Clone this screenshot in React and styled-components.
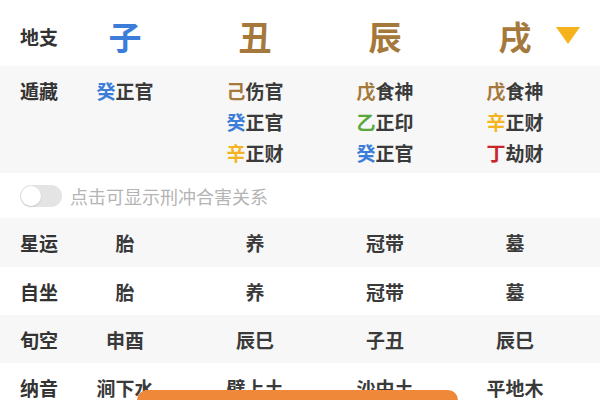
import styled, { createGlobalStyle } from "styled-components";

const GlobalStyle = createGlobalStyle`
  body {
    margin: 0;
    background: #fff;
    font-family: "Noto Sans CJK SC", "Noto Sans", sans-serif;
    color: #333;
    overflow: hidden;
  }
`;

const Page = styled.div`
  position: relative;
  width: 600px;
  height: 400px;
  overflow: hidden;
`;

const Row = styled.div`
  display: grid;
  grid-template-columns: 40px repeat(4, 130px);
  padding: ${(p) => p.top || 0}px 20px 0;
  height: ${(p) => p.h}px;
  box-sizing: border-box;
  align-items: ${(p) => p.align || "center"};
  background: ${(p) => (p.gray ? "#f7f7f7" : "#fff")};
  position: relative;
`;

const Label = styled.div`
  font-size: 19px;
  font-weight: 700;
  color: #333;
  line-height: 31px;
  white-space: nowrap;
`;

const Cell = styled.div`
  text-align: center;
  font-size: 19px;
  font-weight: 700;
  color: #3a3a3a;
  line-height: 31px;
`;

const Branch = styled.div`
  text-align: center;
  font-size: 33px;
  font-weight: 700;
  color: ${(p) => p.color};
  line-height: 40px;
`;

const Stack = styled.div`
  display: flex;
  flex-direction: column;
  align-items: center;
`;

const Line = styled.div`
  font-size: 19px;
  font-weight: 700;
  color: #3a3a3a;
  line-height: 31px;
  white-space: nowrap;
`;

const Stem = styled.span`
  color: ${(p) => p.color};
`;

const Arrow = styled.div`
  position: absolute;
  right: 20px;
  top: 27px;
  width: 0;
  height: 0;
  border-left: 12px solid transparent;
  border-right: 12px solid transparent;
  border-top: 17px solid #f5b21b;
`;

const ToggleRow = styled.div`
  display: flex;
  align-items: center;
  gap: 8px;
  height: 45px;
  padding: 0 20px;
  background: #fff;
`;

const Track = styled.div`
  position: relative;
  width: 42px;
  height: 22px;
  border-radius: 11px;
  background: #e4e4e4;
`;

const Knob = styled.div`
  position: absolute;
  left: 1px;
  top: 1px;
  width: 20px;
  height: 20px;
  border-radius: 50%;
  background: #fff;
  box-shadow: 0 1px 2px rgba(0, 0, 0, 0.12);
`;

const Hint = styled.div`
  font-size: 18px;
  color: #b4b4b4;
`;

const ActionBar = styled.div`
  position: absolute;
  left: 137px;
  bottom: 0;
  width: 321px;
  height: 10px;
  border-radius: 10px 10px 0 0;
  background: #f0883a;
`;

const BLUE = "#3b7dd8";
const BROWN = "#a5783c";
const YELLOW = "#f2b41f";
const GREEN = "#5aa83c";
const RED = "#c9262a";

const branches = [
  { ch: "子", color: BLUE },
  { ch: "丑", color: BROWN },
  { ch: "辰", color: BROWN },
  { ch: "戌", color: BROWN },
];

const hidden = [
  [["癸", BLUE, "正官"]],
  [
    ["己", BROWN, "伤官"],
    ["癸", BLUE, "正官"],
    ["辛", YELLOW, "正财"],
  ],
  [
    ["戊", BROWN, "食神"],
    ["乙", GREEN, "正印"],
    ["癸", BLUE, "正官"],
  ],
  [
    ["戊", BROWN, "食神"],
    ["辛", YELLOW, "正财"],
    ["丁", RED, "劫财"],
  ],
];

const rows = [
  { label: "星运", vals: ["胎", "养", "冠带", "墓"], gray: true, h: 49 },
  { label: "自坐", vals: ["胎", "养", "冠带", "墓"], gray: false, h: 48 },
  { label: "旬空", vals: ["申酉", "辰巳", "子丑", "辰巳"], gray: true, h: 48 },
  { label: "纳音", vals: ["涧下水", "壁上土", "沙中土", "平地木"], gray: false, h: 48 },
];

export default function App() {
  return (
    <Page>
      <GlobalStyle />
      <Row h={66} top={6}>
        <Label>地支</Label>
        {branches.map((b) => (
          <Branch key={b.ch} color={b.color}>
            {b.ch}
          </Branch>
        ))}
        <Arrow />
      </Row>
      <Row h={107} gray align="start" top={9}>
        <Label>遁藏</Label>
        {hidden.map((col, i) => (
          <Stack key={i}>
            {col.map(([s, c, god], j) => (
              <Line key={j}>
                <Stem color={c}>{s}</Stem>
                {god}
              </Line>
            ))}
          </Stack>
        ))}
      </Row>
      <ToggleRow>
        <Track>
          <Knob />
        </Track>
        <Hint>点击可显示刑冲合害关系</Hint>
      </ToggleRow>
      {rows.map((r) => (
        <Row key={r.label} h={r.h} gray={r.gray}>
          <Label>{r.label}</Label>
          {r.vals.map((v, i) => (
            <Cell key={i}>{v}</Cell>
          ))}
        </Row>
      ))}
      <ActionBar />
    </Page>
  );
}
